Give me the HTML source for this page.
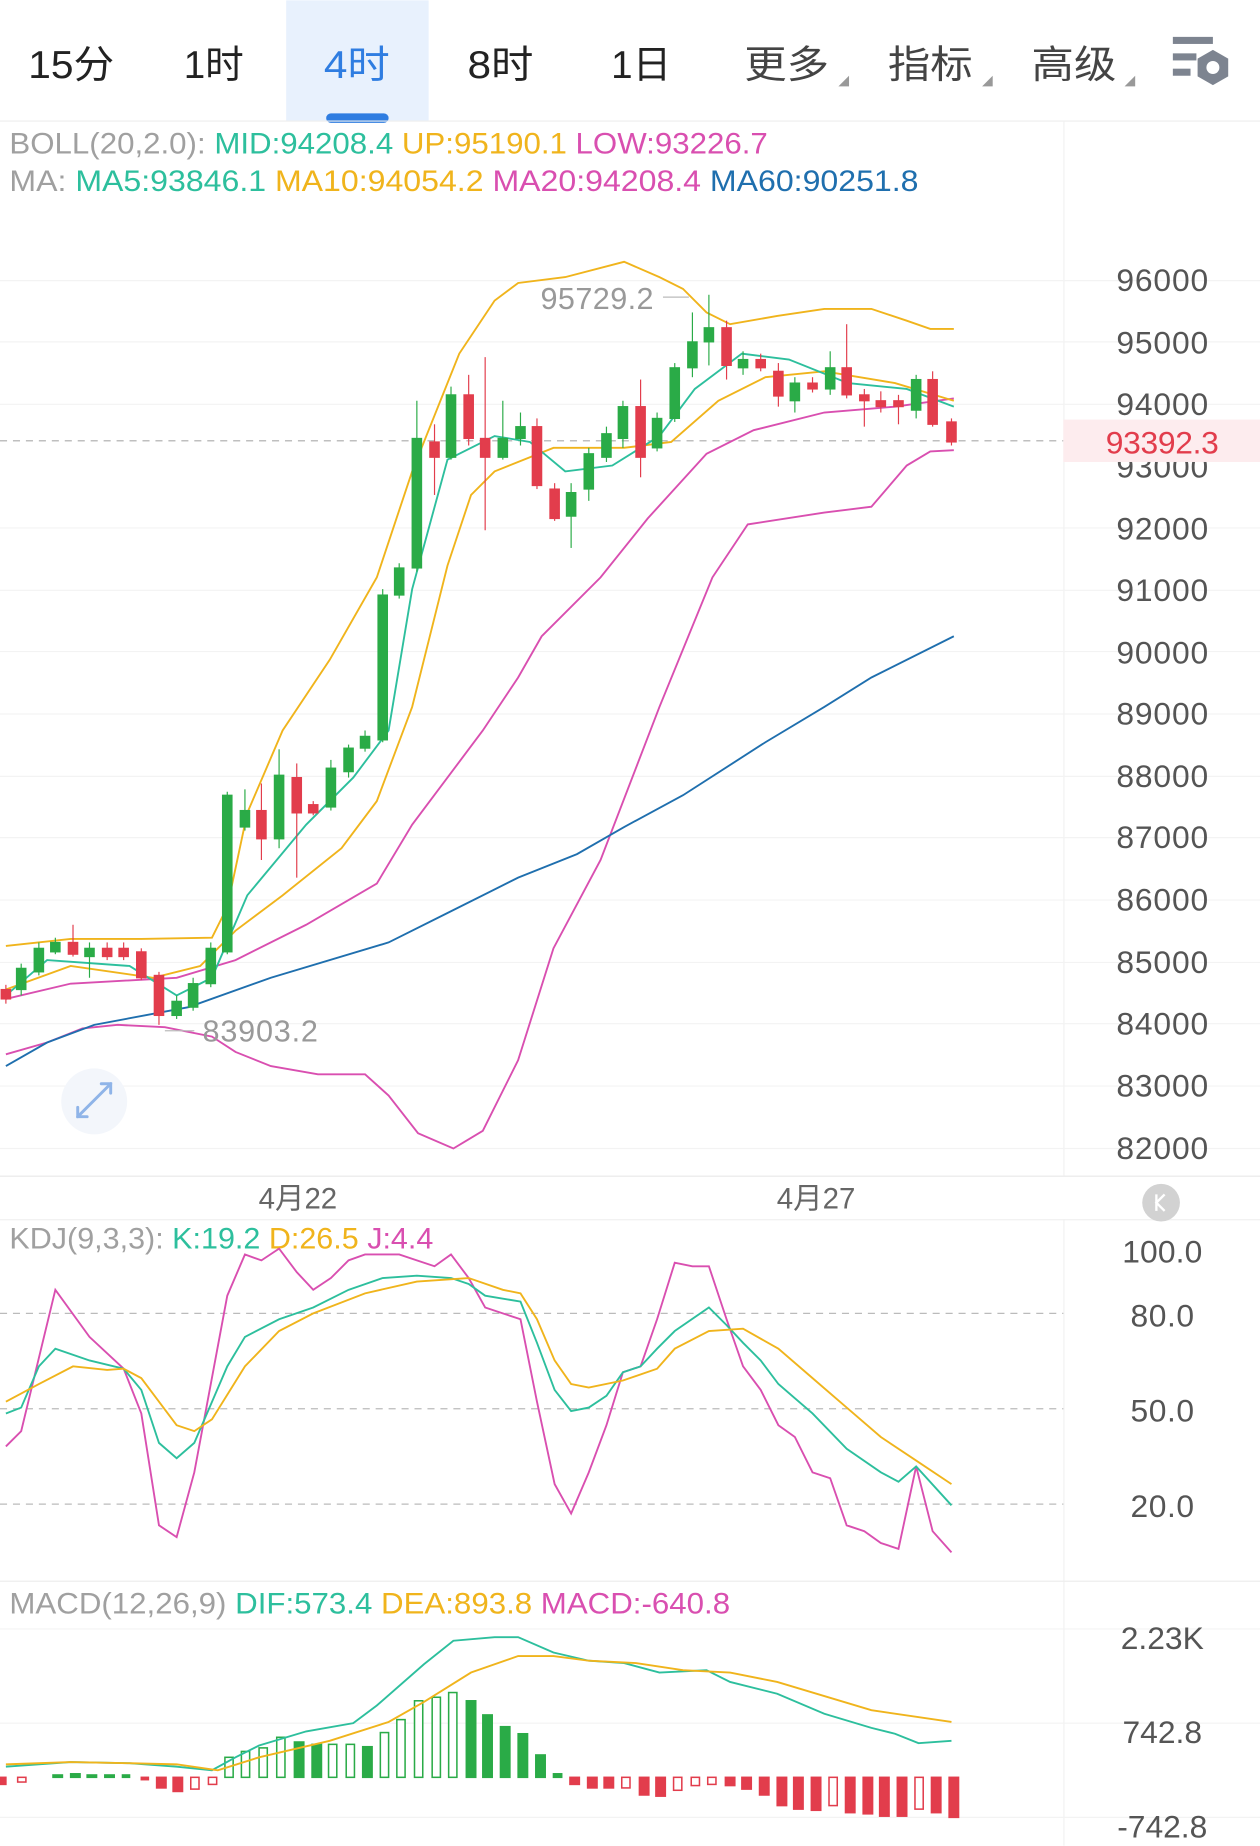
<!DOCTYPE html>
<html><head><meta charset="utf-8"><style>
html,body{margin:0;padding:0;background:#fff;}
svg{display:block;}
text{font-family:"Liberation Sans","Noto Sans CJK SC",sans-serif;}
</style></head><body>
<svg width="1260" height="1846" viewBox="0 0 1070 1567" xmlns="http://www.w3.org/2000/svg">
<rect width="1070" height="1567" fill="#fff"/>
<rect x="243" y="0" width="121" height="102" fill="#e8f1fd"/>
<rect x="277" y="96" width="53" height="8" rx="4" fill="#2f7de1"/>
<line x1="0" y1="102.5" x2="1070" y2="102.5" stroke="#eee"/>
<g font-size="33" fill="#222">
<text x="24" y="66" textLength="73" lengthAdjust="spacingAndGlyphs">15分</text>
<text x="156" y="66" textLength="51" lengthAdjust="spacingAndGlyphs">1时</text>
<text x="275" y="66" textLength="56" lengthAdjust="spacingAndGlyphs" fill="#2f7de1">4时</text>
<text x="397" y="66" textLength="56" lengthAdjust="spacingAndGlyphs">8时</text>
<text x="519" y="66" textLength="51" lengthAdjust="spacingAndGlyphs">1日</text>
<text x="632" y="66" fill="#444" textLength="72" lengthAdjust="spacingAndGlyphs">更多</text>
<text x="754" y="66" fill="#444" textLength="72" lengthAdjust="spacingAndGlyphs">指标</text>
<text x="876" y="66" fill="#444" textLength="72" lengthAdjust="spacingAndGlyphs">高级</text>
</g>
<g fill="#999">
<polygon points="712,73 721,73 721,64"/><polygon points="834,73 843,73 843,64"/><polygon points="955,73 964,73 964,64"/>
</g>
<g fill="#7d8490">
<rect x="996" y="31" width="34" height="6"/><rect x="996" y="45" width="20" height="6"/><rect x="996" y="58" width="15" height="6"/>
<polygon points="1030,42 1043,49.5 1043,64.5 1030,72 1017,64.5 1017,49.5"/>
<circle cx="1030" cy="57" r="5.5" fill="#fff"/>
</g>
<line x1="903.5" y1="103" x2="903.5" y2="998" stroke="#f0f0f0"/>
<line x1="903.5" y1="1035" x2="903.5" y2="1567" stroke="#f0f0f0"/>
<text x="8" y="130" font-size="25" textLength="644" lengthAdjust="spacingAndGlyphs"><tspan fill="#a0a0a0">BOLL(20,2.0): </tspan><tspan fill="#2dbf9d">MID:94208.4 </tspan><tspan fill="#f0b41c">UP:95190.1 </tspan><tspan fill="#d94fb0">LOW:93226.7</tspan></text>
<text x="8" y="162" font-size="25" textLength="772" lengthAdjust="spacingAndGlyphs"><tspan fill="#a0a0a0">MA: </tspan><tspan fill="#2dbf9d">MA5:93846.1 </tspan><tspan fill="#f0b41c">MA10:94054.2 </tspan><tspan fill="#d94fb0">MA20:94208.4 </tspan><tspan fill="#1f6fae">MA60:90251.8</tspan></text>
<g stroke="#f3f3f3">
<line x1="0" y1="238" x2="1070" y2="238"/><line x1="0" y1="290" x2="1070" y2="290"/><line x1="0" y1="343" x2="1070" y2="343"/><line x1="0" y1="448" x2="1070" y2="448"/><line x1="0" y1="501" x2="1070" y2="501"/><line x1="0" y1="553" x2="1070" y2="553"/><line x1="0" y1="606" x2="1070" y2="606"/><line x1="0" y1="659" x2="1070" y2="659"/><line x1="0" y1="711" x2="1070" y2="711"/><line x1="0" y1="764" x2="1070" y2="764"/><line x1="0" y1="817" x2="1070" y2="817"/><line x1="0" y1="869" x2="1070" y2="869"/><line x1="0" y1="922" x2="1070" y2="922"/><line x1="0" y1="975" x2="1070" y2="975"/>
</g>
<line x1="0" y1="998.5" x2="1070" y2="998.5" stroke="#e8e8e8"/>
<line x1="0" y1="1035.5" x2="1070" y2="1035.5" stroke="#f0f0f0"/>
<line x1="0" y1="1342.5" x2="1070" y2="1342.5" stroke="#eee"/>
<g font-size="27" fill="#555">
<text x="948" y="247" textLength="78">96000</text><text x="948" y="300" textLength="78">95000</text><text x="948" y="352" textLength="78">94000</text><text x="948" y="405" textLength="78">93000</text><text x="948" y="458" textLength="78">92000</text><text x="948" y="510" textLength="78">91000</text><text x="948" y="563" textLength="78">90000</text><text x="948" y="615" textLength="78">89000</text><text x="948" y="668" textLength="78">88000</text><text x="948" y="720" textLength="78">87000</text><text x="948" y="773" textLength="78">86000</text><text x="948" y="826" textLength="78">85000</text><text x="948" y="878" textLength="78">84000</text><text x="948" y="931" textLength="78">83000</text><text x="948" y="984" textLength="78">82000</text>
</g>
<line x1="0" y1="374" x2="903" y2="374" stroke="#aaa" stroke-dasharray="6,5"/>
<rect x="903" y="356" width="167" height="36" fill="#fdecee"/>
<text x="939" y="385" font-size="27" fill="#e23d4c" textLength="96">93392.3</text>
<g fill="none" stroke-width="1.6">
<polyline stroke="#f0b41c" points="5,803 60,797 120,797 180,796 193,770 210,690 240,620 280,560 320,490 350,400 390,300 420,255 440,240 480,235 530,222 560,235 580,245 600,265 620,275 660,268 700,262 740,262 770,272 790,279 810,279"/>
<polyline stroke="#d94fb0" points="5,895 40,885 70,873 100,870 140,872 180,880 200,893 230,905 270,912 310,912 330,930 355,962 385,975 410,960 440,900 470,805 510,730 560,600 605,490 635,445 700,435 740,430 770,395 790,383 810,382"/>
<polyline stroke="#1f6fae" points="5,905 40,885 80,870 160,855 230,830 330,800 380,775 440,745 490,725 530,702 580,675 650,630 700,600 740,575 810,540"/>
<polyline stroke="#d94fb0" points="5,848 60,835 150,830 200,815 260,785 320,750 350,700 380,660 410,620 440,575 460,540 510,490 550,440 600,385 640,365 700,350 760,345 810,338"/>
<polyline stroke="#f0b41c" points="5,840 60,820 130,830 170,820 200,790 240,760 290,720 320,680 335,640 350,600 380,480 400,420 420,400 470,380 530,380 570,375 610,340 650,320 700,315 760,325 810,340"/>
<polyline stroke="#2dbf9d" points="5,845 40,815 110,820 150,845 180,830 210,760 260,700 300,660 330,620 350,500 380,390 420,370 450,375 480,400 520,395 560,370 590,330 630,300 670,305 720,325 770,330 810,345"/>
</g>
<g stroke="#e23d4c" fill="#e23d4c">
<line x1="5" y1="836" x2="5" y2="852"/><rect x="1" y="840" width="8" height="8"/>
<line x1="62" y1="785" x2="62" y2="812"/><rect x="58" y="800" width="8" height="10"/>
<line x1="91" y1="800" x2="91" y2="815"/><rect x="87" y="805" width="8" height="7"/>
<line x1="105" y1="800" x2="105" y2="815"/><rect x="101" y="805" width="8" height="7"/>
<line x1="120" y1="805" x2="120" y2="832"/><rect x="116" y="808" width="8" height="22"/>
<line x1="135" y1="825" x2="135" y2="870"/><rect x="131" y="828" width="8" height="34"/>
<line x1="222" y1="665" x2="222" y2="730"/><rect x="218" y="688" width="8" height="24"/>
<line x1="252" y1="648" x2="252" y2="745"/><rect x="248" y="660" width="8" height="30"/>
<line x1="266" y1="680" x2="266" y2="692"/><rect x="262" y="683" width="8" height="7"/>
<line x1="369" y1="360" x2="369" y2="420"/><rect x="365" y="375" width="8" height="13"/>
<line x1="398" y1="318" x2="398" y2="378"/><rect x="394" y="335" width="8" height="37"/>
<line x1="412" y1="303" x2="412" y2="450"/><rect x="408" y="372" width="8" height="16"/>
<line x1="456" y1="355" x2="456" y2="415"/><rect x="452" y="362" width="8" height="50"/>
<line x1="471" y1="410" x2="471" y2="442"/><rect x="467" y="415" width="8" height="25"/>
<line x1="544" y1="322" x2="544" y2="405"/><rect x="540" y="345" width="8" height="43"/>
<line x1="617" y1="272" x2="617" y2="322"/><rect x="613" y="278" width="8" height="32"/>
<line x1="646" y1="300" x2="646" y2="315"/><rect x="642" y="305" width="8" height="7"/>
<line x1="661" y1="308" x2="661" y2="345"/><rect x="657" y="315" width="8" height="21"/>
<line x1="690" y1="320" x2="690" y2="333"/><rect x="686" y="325" width="8" height="5"/>
<line x1="719" y1="275" x2="719" y2="338"/><rect x="715" y="312" width="8" height="23"/>
<line x1="734" y1="330" x2="734" y2="362"/><rect x="730" y="335" width="8" height="5"/>
<line x1="748" y1="332" x2="748" y2="350"/><rect x="744" y="340" width="8" height="5"/>
<line x1="763" y1="335" x2="763" y2="360"/><rect x="759" y="340" width="8" height="5"/>
<line x1="792" y1="315" x2="792" y2="362"/><rect x="788" y="322" width="8" height="38"/>
<line x1="808" y1="355" x2="808" y2="378"/><rect x="804" y="358" width="8" height="17"/>
</g>
<g stroke="#2aab47" fill="#2aab47">
<line x1="18" y1="818" x2="18" y2="845"/><rect x="14" y="822" width="8" height="18"/>
<line x1="33" y1="800" x2="33" y2="828"/><rect x="29" y="805" width="8" height="20"/>
<line x1="47" y1="796" x2="47" y2="810"/><rect x="43" y="800" width="8" height="8"/>
<line x1="76" y1="800" x2="76" y2="830"/><rect x="72" y="805" width="8" height="7"/>
<line x1="150" y1="845" x2="150" y2="865"/><rect x="146" y="850" width="8" height="12"/>
<line x1="164" y1="830" x2="164" y2="858"/><rect x="160" y="835" width="8" height="20"/>
<line x1="179" y1="800" x2="179" y2="838"/><rect x="175" y="805" width="8" height="30"/>
<line x1="193" y1="672" x2="193" y2="810"/><rect x="189" y="675" width="8" height="133"/>
<line x1="208" y1="670" x2="208" y2="705"/><rect x="204" y="688" width="8" height="14"/>
<line x1="237" y1="636" x2="237" y2="720"/><rect x="233" y="658" width="8" height="54"/>
<line x1="281" y1="645" x2="281" y2="688"/><rect x="277" y="652" width="8" height="33"/>
<line x1="296" y1="632" x2="296" y2="660"/><rect x="292" y="635" width="8" height="20"/>
<line x1="310" y1="620" x2="310" y2="638"/><rect x="306" y="625" width="8" height="10"/>
<line x1="325" y1="500" x2="325" y2="630"/><rect x="321" y="505" width="8" height="123"/>
<line x1="339" y1="478" x2="339" y2="508"/><rect x="335" y="482" width="8" height="23"/>
<line x1="354" y1="340" x2="354" y2="485"/><rect x="350" y="372" width="8" height="110"/>
<line x1="383" y1="328" x2="383" y2="390"/><rect x="379" y="335" width="8" height="53"/>
<line x1="427" y1="340" x2="427" y2="390"/><rect x="423" y="372" width="8" height="16"/>
<line x1="442" y1="350" x2="442" y2="378"/><rect x="438" y="362" width="8" height="10"/>
<line x1="485" y1="410" x2="485" y2="465"/><rect x="481" y="418" width="8" height="20"/>
<line x1="500" y1="380" x2="500" y2="425"/><rect x="496" y="385" width="8" height="30"/>
<line x1="515" y1="362" x2="515" y2="392"/><rect x="511" y="368" width="8" height="20"/>
<line x1="529" y1="340" x2="529" y2="380"/><rect x="525" y="345" width="8" height="27"/>
<line x1="558" y1="350" x2="558" y2="383"/><rect x="554" y="355" width="8" height="25"/>
<line x1="573" y1="308" x2="573" y2="358"/><rect x="569" y="312" width="8" height="43"/>
<line x1="588" y1="265" x2="588" y2="320"/><rect x="584" y="290" width="8" height="22"/>
<line x1="602" y1="250" x2="602" y2="310"/><rect x="598" y="278" width="8" height="12"/>
<line x1="631" y1="298" x2="631" y2="318"/><rect x="627" y="305" width="8" height="7"/>
<line x1="675" y1="320" x2="675" y2="350"/><rect x="671" y="325" width="8" height="15"/>
<line x1="705" y1="298" x2="705" y2="335"/><rect x="701" y="312" width="8" height="18"/>
<line x1="778" y1="318" x2="778" y2="355"/><rect x="774" y="322" width="8" height="26"/>
</g>
<line x1="563" y1="252" x2="585" y2="252" stroke="#bbb"/>
<text x="459" y="262" font-size="26" fill="#999" textLength="96">95729.2</text>
<line x1="140" y1="875" x2="165" y2="875" stroke="#bbb"/>
<text x="172" y="884" font-size="26" fill="#999" textLength="98">83903.2</text>
<circle cx="80" cy="935" r="28" fill="#f3f6fb"/>
<g stroke="#8fb4e8" stroke-width="2.5" fill="none" stroke-linecap="round">
<line x1="66" y1="948" x2="94" y2="920"/><polyline points="86,920 94,920 94,928"/><polyline points="66,940 66,948 74,948"/>
</g>
<g font-size="25" fill="#666" text-anchor="middle"><text x="253" y="1026">4月22</text><text x="693" y="1026">4月27</text></g>
<circle cx="986" cy="1021" r="16" fill="#d2d2d2"/>
<path d="M989 1014 L982 1021 L989 1028 M982 1014 L982 1028" stroke="#fff" stroke-width="2" fill="none"/>
<text x="8" y="1060" font-size="25" textLength="360" lengthAdjust="spacingAndGlyphs"><tspan fill="#a0a0a0">KDJ(9,3,3): </tspan><tspan fill="#2dbf9d">K:19.2 </tspan><tspan fill="#f0b41c">D:26.5 </tspan><tspan fill="#d94fb0">J:4.4</tspan></text>
<g stroke="#bbb" stroke-dasharray="6,5"><line x1="0" y1="1115" x2="903" y2="1115"/><line x1="0" y1="1196" x2="903" y2="1196"/><line x1="0" y1="1277" x2="903" y2="1277"/></g>
<g font-size="27" fill="#555"><text x="953" y="1072" textLength="68">100.0</text><text x="960" y="1126" textLength="54">80.0</text><text x="960" y="1207" textLength="54">50.0</text><text x="960" y="1288" textLength="54">20.0</text></g>
<g fill="none" stroke-width="1.6">
<polyline stroke="#d94fb0" points="5,1228 18,1215 47,1095 76,1135 105,1162 120,1200 135,1295 150,1305 165,1250 193,1100 208,1065 222,1070 237,1060 252,1080 266,1095 281,1085 296,1070 310,1065 339,1065 354,1070 369,1075 383,1065 398,1085 412,1110 427,1115 442,1120 456,1190 471,1260 485,1285 500,1250 515,1210 529,1165 544,1160 558,1120 573,1072 588,1075 602,1075 617,1120 631,1160 646,1180 661,1210 675,1220 690,1250 705,1255 719,1295 734,1300 748,1310 763,1315 778,1245 792,1300 808,1318"/>
<polyline stroke="#2dbf9d" points="5,1200 18,1195 33,1160 47,1145 76,1155 105,1162 120,1180 135,1225 150,1238 165,1225 193,1160 208,1135 237,1120 266,1110 296,1095 325,1085 354,1083 383,1085 398,1090 412,1100 442,1105 456,1140 471,1180 485,1198 500,1195 515,1185 529,1165 544,1160 558,1145 573,1130 602,1110 617,1125 631,1140 646,1155 661,1175 690,1200 719,1230 748,1250 763,1258 778,1245 808,1278"/>
<polyline stroke="#f0b41c" points="5,1190 33,1175 62,1160 91,1163 105,1162 120,1170 150,1210 165,1215 180,1205 208,1160 237,1130 266,1115 310,1098 354,1088 398,1085 427,1095 442,1098 456,1120 471,1155 485,1175 500,1178 529,1172 558,1162 573,1145 602,1130 631,1128 661,1145 690,1170 719,1195 748,1220 778,1240 808,1260"/>
</g>
<text x="8" y="1370" font-size="25" textLength="612" lengthAdjust="spacingAndGlyphs"><tspan fill="#a0a0a0">MACD(12,26,9) </tspan><tspan fill="#2dbf9d">DIF:573.4 </tspan><tspan fill="#f0b41c">DEA:893.8 </tspan><tspan fill="#d94fb0">MACD:-640.8</tspan></text>
<g stroke="#f3f3f3"><line x1="0" y1="1383" x2="1070" y2="1383"/><line x1="0" y1="1463" x2="1070" y2="1463"/><line x1="0" y1="1543" x2="1070" y2="1543"/></g>
<g font-size="27" fill="#555" text-anchor="middle"><text x="987" y="1400">2.23K</text><text x="987" y="1480">742.8</text><text x="987" y="1560">-742.8</text></g>
<g fill="#2aab47" stroke="#2aab47" stroke-width="1.3">
<rect x="45" y="1507" width="8" height="2"/><rect x="60" y="1506" width="8" height="3"/><rect x="74" y="1507" width="8" height="2"/><rect x="89" y="1507" width="8" height="2"/><rect x="104" y="1507" width="6" height="2"/>
<rect x="191" y="1492" width="7" height="17" fill="#fff"/><rect x="205" y="1487" width="7" height="22" fill="#fff"/><rect x="220" y="1484" width="7" height="25" fill="#fff"/><rect x="235" y="1475" width="7" height="34" fill="#fff"/>
<rect x="250" y="1479" width="8" height="30"/><rect x="265" y="1481" width="8" height="28"/>
<rect x="279" y="1481" width="7" height="28" fill="#fff"/><rect x="294" y="1481" width="7" height="28" fill="#fff"/>
<rect x="308" y="1483" width="8" height="26"/>
<rect x="323" y="1471" width="7" height="38" fill="#fff"/><rect x="337" y="1460" width="7" height="49" fill="#fff"/><rect x="352" y="1444" width="7" height="65" fill="#fff"/><rect x="367" y="1441" width="7" height="68" fill="#fff"/><rect x="381" y="1437" width="7" height="72" fill="#fff"/>
<rect x="396" y="1444" width="8" height="65"/><rect x="410" y="1456" width="8" height="53"/><rect x="425" y="1466" width="8" height="43"/><rect x="440" y="1472" width="8" height="37"/><rect x="455" y="1490" width="8" height="19"/><rect x="470" y="1506" width="7" height="3"/>
</g>
<g fill="#e23d4c" stroke="#e23d4c" stroke-width="1.3">
<rect x="0" y="1509" width="5" height="6"/><rect x="15" y="1509" width="7" height="4" fill="#fff"/><rect x="120" y="1509" width="6" height="2"/>
<rect x="133" y="1509" width="8" height="9"/><rect x="147" y="1509" width="8" height="12"/><rect x="162" y="1509" width="7" height="10" fill="#fff"/><rect x="177" y="1509" width="7" height="6" fill="#fff"/>
<rect x="484" y="1509" width="8" height="6"/><rect x="499" y="1509" width="8" height="9"/><rect x="513" y="1509" width="8" height="9"/><rect x="528" y="1509" width="7" height="9" fill="#fff"/><rect x="543" y="1509" width="8" height="15"/><rect x="557" y="1509" width="8" height="16"/>
<rect x="572" y="1509" width="7" height="11" fill="#fff"/><rect x="587" y="1509" width="7" height="7" fill="#fff"/><rect x="601" y="1509" width="7" height="6" fill="#fff"/>
<rect x="616" y="1509" width="8" height="7"/><rect x="630" y="1509" width="8" height="10"/><rect x="645" y="1509" width="8" height="15"/><rect x="660" y="1509" width="8" height="24"/><rect x="674" y="1509" width="8" height="27"/>
<rect x="689" y="1509" width="8" height="28"/><rect x="704" y="1509" width="7" height="24" fill="#fff"/><rect x="718" y="1509" width="8" height="30"/><rect x="733" y="1509" width="8" height="31"/><rect x="747" y="1509" width="8" height="33"/><rect x="762" y="1509" width="8" height="33"/><rect x="777" y="1509" width="7" height="27" fill="#fff"/><rect x="791" y="1509" width="8" height="30"/><rect x="806" y="1509" width="8" height="34"/>
</g>
<g fill="none" stroke-width="1.6">
<polyline stroke="#2dbf9d" points="5,1500 60,1496 110,1497 150,1500 180,1503 200,1492 220,1482 260,1470 300,1463 320,1448 360,1413 385,1393 420,1390 440,1390 470,1403 500,1410 530,1412 560,1420 600,1418 620,1428 660,1438 700,1455 740,1467 760,1472 780,1480 808,1478"/>
<polyline stroke="#f0b41c" points="5,1498 60,1496 110,1497 150,1498 185,1503 220,1492 280,1478 330,1462 360,1445 400,1420 440,1406 470,1406 500,1410 540,1412 580,1418 620,1420 660,1428 700,1440 740,1452 808,1462"/>
</g>
</svg>
</body></html>
